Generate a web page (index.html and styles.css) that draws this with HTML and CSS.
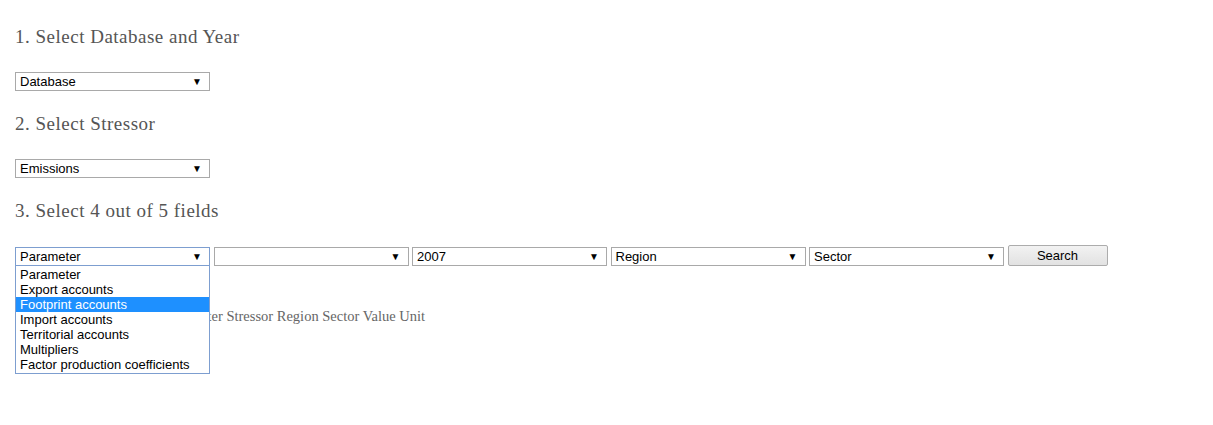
FILE: index.html
```html
<!DOCTYPE html>
<html>
<head>
<meta charset="utf-8">
<link rel="stylesheet" href="styles.css">
</head>
<body>
<div class="page">
  <h2 class="step">1. Select Database and Year</h2>
  <div class="row"><div class="sel"><span>Database</span><span class="arrow">▼</span></div></div>
  <h2 class="step">2. Select Stressor</h2>
  <div class="row"><div class="sel"><span>Emissions</span><span class="arrow">▼</span></div></div>
  <h2 class="step">3. Select 4 out of 5 fields</h2>
  <div class="row fields">
    <div class="wrap">
      <div class="sel focus"><span>Parameter</span><span class="arrow">▼</span></div>
      <ul class="menu">
        <li>Parameter</li>
        <li>Export accounts</li>
        <li class="hl">Footprint accounts</li>
        <li>Import accounts</li>
        <li>Territorial accounts</li>
        <li>Multipliers</li>
        <li>Factor production coefficients</li>
      </ul>
    </div>
    <div class="sel"><span></span><span class="arrow">▼</span></div>
    <div class="sel"><span>2007</span><span class="arrow">▼</span></div>
    <div class="sel"><span>Region</span><span class="arrow">▼</span></div>
    <div class="sel"><span>Sector</span><span class="arrow">▼</span></div>
    <button class="btn">Search</button>
  </div>
  <div class="thead">Parameter Stressor Region Sector Value Unit</div>
</div>
</body>
</html>
```
FILE: styles.css
```css
html, body { margin: 0; padding: 0; background: #fff; }
body { min-height: 425px; }
.page { padding: 27px 15px 80px 15px; }
.step {
  font-family: "Liberation Serif", "DejaVu Serif", serif;
  font-weight: normal;
  font-size: 19px;
  color: #555;
  margin: 0;
  height: 20px;
  line-height: 20px;
  letter-spacing: 0.5px;
}
.row { display: flex; align-items: center; margin-top: 25px; margin-bottom: 23px; }
.fields { gap: 3.5px; margin-top: 26px; align-items: flex-start; }
.wrap { position: relative; }
.sel {
  box-sizing: border-box;
  width: 195px;
  height: 19px;
  border: 1px solid #a9a9a9;
  background: #fff;
  display: flex;
  align-items: center;
  justify-content: space-between;
  padding: 0 4px 0 4px;
  font-family: "Liberation Sans", Arial, sans-serif;
  font-size: 13px;
  color: #000;
}
.sel.focus { border-color: #7d9ed0; }
.arrow { font-size: 10px; margin-right: 3px; }
.menu {
  position: absolute;
  left: 0; top: 18px;
  width: 195px;
  box-sizing: border-box;
  margin: 0; padding: 1px 0;
  list-style: none;
  background: #fff;
  border: 1px solid #7d9ed0;
  font-family: "Liberation Sans", Arial, sans-serif;
  font-size: 13px;
  z-index: 2;
}
.menu li { height: 15px; line-height: 15px; padding-left: 4px; color: #000; }
.menu li.hl { background: #1e90ff; color: #fff; }
.btn {
  box-sizing: border-box;
  width: 100px; height: 21px;
  margin-top: -2px;
  border: 1px solid #acacac;
  border-radius: 2px;
  background: linear-gradient(#f2f2f2, #e2e2e2);
  font-family: "Liberation Sans", Arial, sans-serif;
  font-size: 13px;
  color: #000;
  padding: 0;
}
.thead {
  margin-top: 42px;
  padding-left: 149px;
  font-family: "Liberation Serif", "DejaVu Serif", serif;
  font-size: 14.5px;
  color: #666;
}
```
